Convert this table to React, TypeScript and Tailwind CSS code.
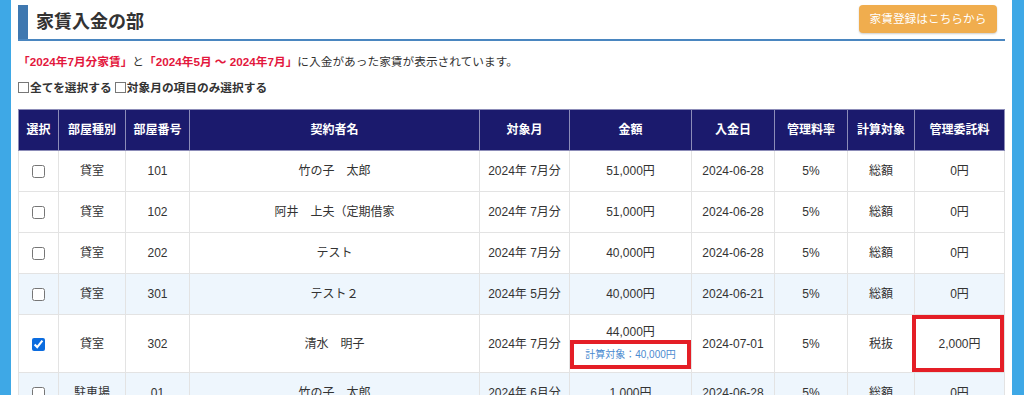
import React from "react";

interface RentRow {
    type: string;
    room: string;
    name: string;
    month: string;
    amount: string;
    date: string;
    rate: string;
    basis: string;
    fee: string;
    checked?: boolean;
    tinted?: boolean;
    note?: string;
}

const rows: RentRow[] = [
    { type: "貸室", room: "101", name: "竹の子　太郎", month: "2024年 7月分", amount: "51,000円", date: "2024-06-28", rate: "5%", basis: "総額", fee: "0円" },
    { type: "貸室", room: "102", name: "阿井　上夫（定期借家", month: "2024年 7月分", amount: "51,000円", date: "2024-06-28", rate: "5%", basis: "総額", fee: "0円" },
    { type: "貸室", room: "202", name: "テスト", month: "2024年 7月分", amount: "40,000円", date: "2024-06-28", rate: "5%", basis: "総額", fee: "0円" },
    { type: "貸室", room: "301", name: "テスト２", month: "2024年 5月分", amount: "40,000円", date: "2024-06-21", rate: "5%", basis: "総額", fee: "0円", tinted: true },
    { type: "貸室", room: "302", name: "清水　明子", month: "2024年 7月分", amount: "44,000円", date: "2024-07-01", rate: "5%", basis: "税抜", fee: "2,000円", checked: true, note: "計算対象：40,000円" },
    { type: "駐車場", room: "01", name: "竹の子　太郎", month: "2024年 6月分", amount: "1,000円", date: "2024-06-28", rate: "5%", basis: "総額", fee: "0円", tinted: true },
];

const headers = ["選択", "部屋種別", "部屋番号", "契約者名", "対象月", "金額", "入金日", "管理料率", "計算対象", "管理委託料"];
const widths = [40, 67, 64, 290, 90, 122, 83, 73, 67, 90];

function Box() {
    return <span className="inline-block w-[11px] h-[11px] border border-[#777] bg-white mr-[1px] align-[-1px]" />;
}

export default function App() {
    return (
        <div
            className="flex h-[395px] w-[1024px] overflow-hidden bg-white text-[#333]"
            style={{ fontFamily: '"Liberation Sans", "Noto Sans CJK JP", sans-serif' }}
        >
            <div className="w-[11px] shrink-0 bg-[#3ea8e6]" />
            <div className="flex-1 px-[7px]">
                {/* header */}
                <div className="flex items-start justify-between border-b-2 border-[#4a86c0]">
                    <h1 className="mt-[5px] h-[34px] flex items-center border-l-[10px] border-[#3f78b0] pl-[8px] text-[18px] font-bold">
                        家賃入金の部
                    </h1>
                    <button className="mt-[5px] mr-[8px] h-[28px] w-[138px] rounded-[4px] bg-[#f0ad4e] text-[11.7px] text-white shadow-[0_1px_2px_rgba(0,0,0,0.2)]">
                        家賃登録はこちらから
                    </button>
                </div>

                <p className="mt-[13px] text-[11.7px] leading-[16px]">
                    <span className="font-bold text-[#e3173d]">「2024年7月分家賃」</span>
                    と
                    <span className="font-bold text-[#e3173d]">「2024年5月 ～ 2024年7月」</span>
                    に入金があった家賃が表示されています。
                </p>
                <p className="mt-[10px] text-[11.7px] leading-[16px] font-bold">
                    <Box />全てを選択する <Box />対象月の項目のみ選択する
                </p>

                <table className="mt-[13px] w-[986px] table-fixed border-collapse text-[12px]">
                    <colgroup>
                        {widths.map((w, i) => (
                            <col key={i} style={{ width: w }} />
                        ))}
                    </colgroup>
                    <thead>
                        <tr className="h-[41px] bg-[#1b1a6d] text-white">
                            {headers.map((h) => (
                                <th key={h} className="border border-[#8c8cb8] font-bold">
                                    {h}
                                </th>
                            ))}
                        </tr>
                    </thead>
                    <tbody>
                        {rows.map((r) => (
                            <tr
                                key={r.room}
                                className={`${r.note ? "h-[58px]" : "h-[41px]"} ${r.tinted ? "bg-[#eef6fd]" : "bg-white"} text-center`}
                            >
                                <td className="border border-[#e3e3e3]">
                                    <input
                                        type="checkbox"
                                        defaultChecked={r.checked}
                                        className="w-[13px] h-[13px] align-middle accent-[#0b6cdf]"
                                    />
                                </td>
                                <td className="border border-[#e3e3e3]">{r.type}</td>
                                <td className="border border-[#e3e3e3]">{r.room}</td>
                                <td className="border border-[#e3e3e3]">{r.name}</td>
                                <td className="border border-[#e3e3e3]">{r.month}</td>
                                {r.note ? (
                                    <td className="border border-[#e3e3e3] p-0 align-bottom pb-[3px]">
                                        <div className="leading-[16px]">{r.amount}</div>
                                        <div className="h-[29px] border-4 border-[#e41e26] flex items-center justify-center text-[10px] text-[#4b8ad0]">
                                            {r.note}
                                        </div>
                                    </td>
                                ) : (
                                    <td className="border border-[#e3e3e3]">{r.amount}</td>
                                )}
                                <td className="border border-[#e3e3e3]">{r.date}</td>
                                <td className="border border-[#e3e3e3]">{r.rate}</td>
                                <td className="border border-[#e3e3e3]">{r.basis}</td>
                                <td className="relative border border-[#e3e3e3]">
                                    {r.fee}
                                    {r.note && (
                                        <div className="absolute top-0 bottom-0 left-[-3px] right-0 border-4 border-[#e41e26]" />
                                    )}
                                </td>
                            </tr>
                        ))}
                    </tbody>
                </table>
            </div>
            <div className="w-[13px] shrink-0 bg-[#3ea8e6]" />
        </div>
    );
}
